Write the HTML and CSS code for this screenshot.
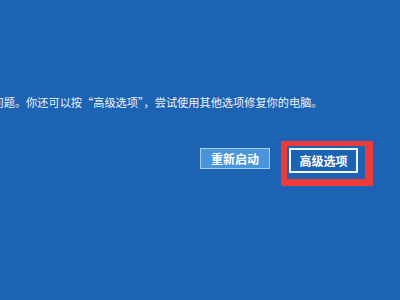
FILE: index.html
```html
<!DOCTYPE html>
<html lang="zh-CN">
<head>
<meta charset="utf-8">
<link rel="stylesheet" href="styles.css">
</head>
<body>
<div class="screen">
  <p class="msg">问题。你还可以按“高级选项”，尝试使用其他选项修复你的电脑。</p>
  <div class="actions">
    <button class="btn btn-restart">重新启动</button>
    <div class="highlight">
      <button class="btn btn-advanced">高级选项</button>
    </div>
  </div>
</div>
</body>
</html>
```
FILE: styles.css
```css
html, body {
  margin: 0;
  padding: 0;
  background: #1d63b3;
}
.screen {
  width: 400px;
  height: 300px;
  overflow: hidden;
  background: #1d63b3;
  font-family: "Noto Sans CJK SC", "Microsoft YaHei", sans-serif;
  color: #eef4fb;
}
.msg {
  margin: 94px 0 0 -7.5px;
  font-size: 11.2px;
  line-height: 16px;
  white-space: nowrap;
}
.actions {
  display: flex;
  align-items: flex-start;
  margin: 31px 0 0 200px;
  gap: 11px;
}
.btn {
  font-family: "Noto Sans CJK SC", sans-serif;
  font-size: 12px;
  font-weight: 700;
  color: #ffffff;
  padding: 0;
  margin: 0;
  box-sizing: border-box;
  display: flex;
  align-items: center;
  justify-content: center;
  line-height: 1;
}
.btn-restart {
  margin-top: 7px;
  width: 70px;
  height: 21px;
  background: #4895dc;
  border: 1px solid #a9d0f2;
}
.highlight {
  border-style: solid;
  border-color: #ef3a3a;
  border-width: 5px 8px 7px 6px;
  padding: 2px 7px 6px 2px;
}
.btn-advanced {
  width: 69px;
  height: 25px;
  background: #1d63b3;
  border: 2px solid #f2f7fc;
}
```
